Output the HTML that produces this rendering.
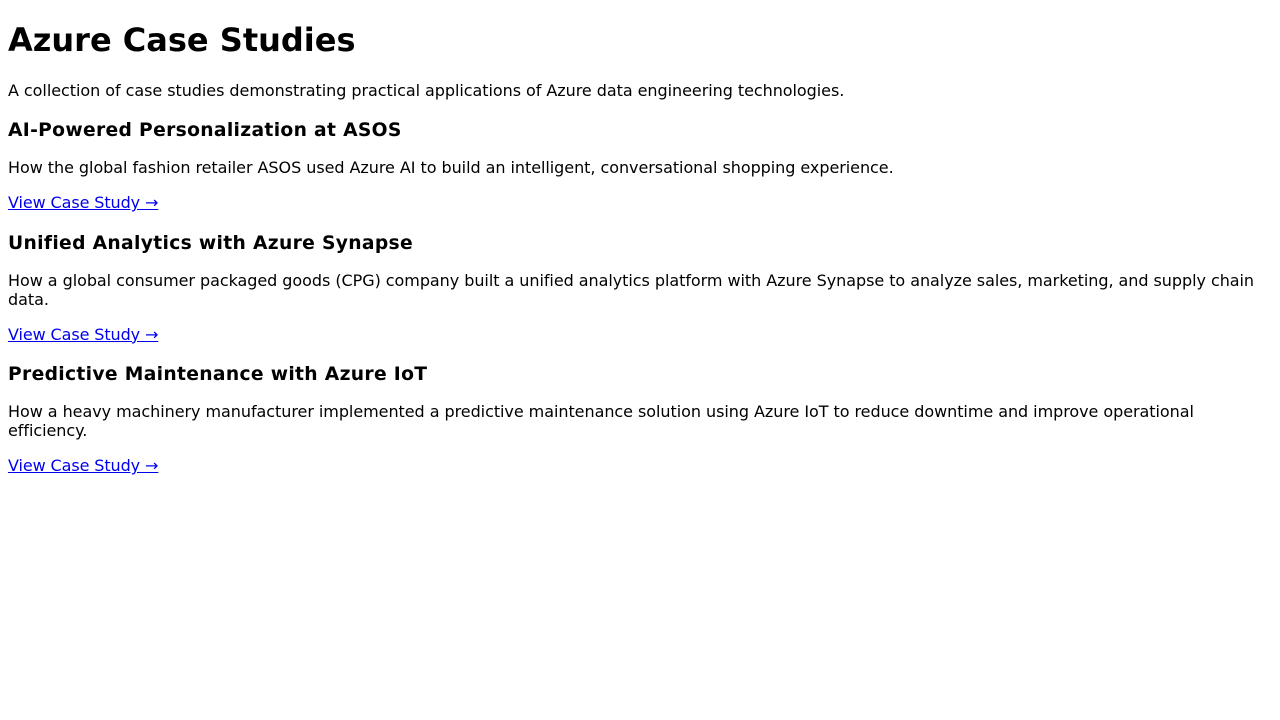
<!DOCTYPE html>
<html>
<head>
<meta charset="utf-8">
<title>Azure Case Studies</title>
<style>
body { font-family: "DejaVu Sans", sans-serif; margin: 8px; color: #000; background: #fff; }
a { color: #0000ee; letter-spacing: -0.1px; }
p { letter-spacing: -0.05px; }
h3 { letter-spacing: 0.32px; position: relative; top: 1.5px; }
</style>
</head>
<body>
<h1>Azure Case Studies</h1>
<p>A collection of case studies demonstrating practical applications of Azure data engineering technologies.</p>
<h3>AI-Powered Personalization at ASOS</h3>
<p>How the global fashion retailer ASOS used Azure AI to build an intelligent, conversational shopping experience.</p>
<p><a href="#">View Case Study →</a></p>
<h3>Unified Analytics with Azure Synapse</h3>
<p>How a global consumer packaged goods (CPG) company built a unified analytics platform with Azure Synapse to analyze sales, marketing, and supply chain data.</p>
<p><a href="#">View Case Study →</a></p>
<h3>Predictive Maintenance with Azure IoT</h3>
<p>How a heavy machinery manufacturer implemented a predictive maintenance solution using Azure IoT to reduce downtime and improve operational efficiency.</p>
<p><a href="#">View Case Study →</a></p>
</body>
</html>
